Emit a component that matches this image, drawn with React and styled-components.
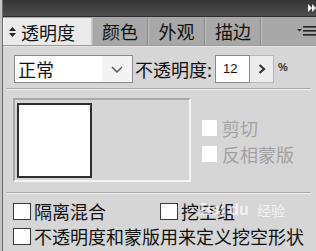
import React from 'react';
import styled, { createGlobalStyle } from 'styled-components';

const GlobalStyle = createGlobalStyle`
  html, body {
    margin: 0;
    padding: 0;
    background: #c4c4c4;
  }
  body {
    font-family: "Noto Sans CJK SC", "Noto Sans", sans-serif;
  }
`;

const S = {};

S.Window = styled.div`
  width: 316px;
  height: 251px;
  padding-left: 2px;
  box-sizing: border-box;
  background: #c4c4c4;
  overflow: hidden;
`;
S.Panel = styled.div`
  position: relative;
  height: 100%;
  border-left: 1px solid #6a6a6a;
  background: #d6d6d6;
  display: flex;
  flex-direction: column;
`;
S.TopBar = styled.div`
  height: 16px;
  flex: none;
  background: linear-gradient(#353535, #4e4e4e);
  border-bottom: 1px solid #2c2c2c;
  display: flex;
  justify-content: flex-end;
  align-items: center;
`;
S.TabBar = styled.div`
  height: 28px;
  flex: none;
  display: flex;
  background: #a6a6a6;
  border-bottom: 1px solid #9a9a9a;
`;
S.Tab = styled.div`
  width: ${({ w }) => w}px;
  flex: none;
  display: flex;
  align-items: center;
  justify-content: ${({ active }) => (active ? 'flex-start' : 'center')};
  gap: 5px;
  padding-left: ${({ active }) => (active ? '5px' : '0')};
  box-sizing: border-box;
  margin-top: ${({ active }) => (active ? '1px' : '0')};
  background: ${({ active }) => (active ? '#eaeaea' : '#a8a8a8')};
  border-right: 1px solid ${({ active }) => (active ? '#cfcfcf' : '#8c8c8c')};
  border-left: 1px solid ${({ active }) => (active ? '#f6f6f6' : '#bcbcbc')};
  font-size: 18px;
  color: #111;
`;
S.TabMenu = styled.div`
  flex: 1;
  display: flex;
  justify-content: flex-end;
  align-items: center;
  background: #a8a8a8;
  border-left: 1px solid #bcbcbc;
`;
S.Content = styled.div`
  flex: 1;
  padding: 0 5px 0 4px;
  background: #d6d6d6;
  border-top: 1px solid #e6e6e6;
`;
S.OptionsRow = styled.div`
  display: flex;
  align-items: center;
  height: 28px;
  margin-top: 8px;
  padding-left: 7px;
`;
S.Select = styled.div`
  width: 119px;
  height: 28px;
  box-sizing: border-box;
  border: 1px solid #8a8a8a;
  display: flex;
  background: #fff;
`;
S.SelectValue = styled.div`
  flex: 1;
  font-size: 18px;
  line-height: 26px;
  padding-left: 3px;
  color: #111;
`;
S.SelectArrow = styled.div`
  width: 30px;
  background: #f3f3f3;
  display: flex;
  align-items: center;
  justify-content: center;
`;
S.Label = styled.div`
  font-size: 18px;
  color: #111;
  margin-left: 2px;
`;
S.NumberInput = styled.div`
  width: 35px;
  height: 28px;
  margin-left: 3px;
  box-sizing: border-box;
  border: 1px solid #8a8a8a;
  background: #fff;
  font-family: "Liberation Sans", Arial, sans-serif;
  font-size: 13px;
  line-height: 26px;
  padding-left: 7px;
  color: #111;
`;
S.StepButton = styled.div`
  width: 24px;
  height: 28px;
  box-sizing: border-box;
  border: 1px solid #b8b8b8;
  border-left: none;
  background: #ececec;
  display: flex;
  align-items: center;
  justify-content: center;
`;
S.Percent = styled.div`
  font-family: "Liberation Sans", Arial, sans-serif;
  font-weight: bold;
  font-size: 11px;
  color: #333;
  margin-left: 4px;
  align-self: flex-start;
  margin-top: 6px;
`;
S.Separator = styled.div`
  height: 1px;
  margin-top: ${({ top }) => top}px;
  background: #a9a9a9;
  border-bottom: 1px solid #f2f2f2;
`;
S.PreviewRow = styled.div`
  display: flex;
  margin-top: 8px;
  padding-left: 6px;
`;
S.PreviewBox = styled.div`
  width: 178px;
  height: 84px;
  box-sizing: border-box;
  border-top: 2px solid #a8a8a8;
  border-left: 2px solid #a8a8a8;
  border-right: 2px solid #f4f4f4;
  border-bottom: 2px solid #f4f4f4;
  padding: 3px 0 0 2px;
`;
S.Thumb = styled.div`
  width: 75px;
  height: 75px;
  box-sizing: border-box;
  border: 2px solid #2e2e2e;
  background: #fff;
`;
S.MaskOptions = styled.div`
  display: flex;
  flex-direction: column;
  gap: 8px;
  margin: 21px 0 0 11px;
`;
S.Check = styled.div`
  display: flex;
  align-items: center;
  gap: ${({ disabled }) => (disabled ? 5 : 3)}px;
  font-size: 18px;
  line-height: 18px;
  color: ${({ disabled }) => (disabled ? '#a2a2a2' : '#111')};
  white-space: nowrap;
`;
S.Box = styled.span`
  display: block;
  flex: none;
  width: ${({ disabled }) => (disabled ? 15 : 18)}px;
  height: ${({ disabled }) => (disabled ? 16 : 17)}px;
  box-sizing: border-box;
  background: #fff;
  border: ${({ disabled }) => (disabled ? 'none' : '1px solid #3a3a3a')};
`;
S.CheckGrid = styled.div`
  display: grid;
  grid-template-columns: 147px auto;
  row-gap: 7px;
  margin-top: 8px;
  padding-left: 6px;
`;
S.Wide = styled.div`
  grid-column: 1 / span 2;
`;
S.Watermark = styled.div`
  position: absolute;
  left: 197px;
  top: 200px;
  display: flex;
  align-items: center;
  color: rgba(255, 255, 255, 0.7);
  font-family: "Liberation Sans", Arial, sans-serif;
  font-weight: bold;
  font-size: 16px;
  pointer-events: none;
`;
S.WatermarkCn = styled.span`
  font-family: "Noto Sans CJK SC", sans-serif;
  font-weight: normal;
  font-size: 14px;
  margin-left: 8px;
`;

function UpDownIcon() {
  return (
    <svg width="7" height="10" viewBox="0 0 7 10">
      <path d="M3.5 0 L7 4 H0 Z M3.5 10 L7 6 H0 Z" fill="#222" />
    </svg>
  );
}

function MenuIcon() {
  return (
    <svg width="19" height="10" viewBox="0 0 19 10">
      <path d="M0 3 H5 L2.5 5.5 Z" fill="#222" />
      <rect x="6" y="0" width="13" height="1.6" fill="#222" />
      <rect x="6" y="4" width="13" height="1.6" fill="#222" />
      <rect x="6" y="8" width="13" height="1.6" fill="#222" />
    </svg>
  );
}

function CollapseIcon() {
  return (
    <svg width="8" height="8" viewBox="0 0 8 8">
      <path d="M0 0 L4 4 L0 8 Z M4 0 L8 4 L4 8 Z" fill="#f2f2f2" />
    </svg>
  );
}

function Check({ label, disabled }) {
  return (
    <S.Check disabled={disabled}>
      <S.Box disabled={disabled} />
      {label}
    </S.Check>
  );
}

const TABS = [
  { label: '颜色', w: 56 },
  { label: '外观', w: 57 },
  { label: '描边', w: 56 },
];

export default function App() {
  return (
    <S.Window>
      <GlobalStyle />
      <S.Panel>
        <S.TopBar>
          <CollapseIcon />
        </S.TopBar>
        <S.TabBar>
          <S.Tab active w={89}>
            <UpDownIcon />
            透明度
          </S.Tab>
          {TABS.map((t) => (
            <S.Tab key={t.label} w={t.w}>{t.label}</S.Tab>
          ))}
          <S.TabMenu>
            <MenuIcon />
          </S.TabMenu>
        </S.TabBar>
        <S.Content>
          <S.OptionsRow>
            <S.Select>
              <S.SelectValue>正常</S.SelectValue>
              <S.SelectArrow>
                <svg width="12" height="7" viewBox="0 0 12 7">
                  <path d="M1 1 L6 6 L11 1" fill="none" stroke="#555" strokeWidth="1.4" />
                </svg>
              </S.SelectArrow>
            </S.Select>
            <S.Label>不透明度:</S.Label>
            <S.NumberInput>12</S.NumberInput>
            <S.StepButton>
              <svg width="8" height="10" viewBox="0 0 8 10">
                <path d="M1.5 1 L6 5 L1.5 9" fill="none" stroke="#333" strokeWidth="2.2" />
              </svg>
            </S.StepButton>
            <S.Percent>%</S.Percent>
          </S.OptionsRow>
          <S.Separator top={5} />
          <S.PreviewRow>
            <S.PreviewBox>
              <S.Thumb />
            </S.PreviewBox>
            <S.MaskOptions>
              <Check label="剪切" disabled />
              <Check label="反相蒙版" disabled />
            </S.MaskOptions>
          </S.PreviewRow>
          <S.Separator top={10} />
          <S.CheckGrid>
            <Check label="隔离混合" />
            <Check label="挖空组" />
            <S.Wide>
              <Check label="不透明度和蒙版用来定义挖空形状" />
            </S.Wide>
          </S.CheckGrid>
        </S.Content>
        <S.Watermark>
          Bai du<S.WatermarkCn>经验</S.WatermarkCn>
        </S.Watermark>
      </S.Panel>
    </S.Window>
  );
}
